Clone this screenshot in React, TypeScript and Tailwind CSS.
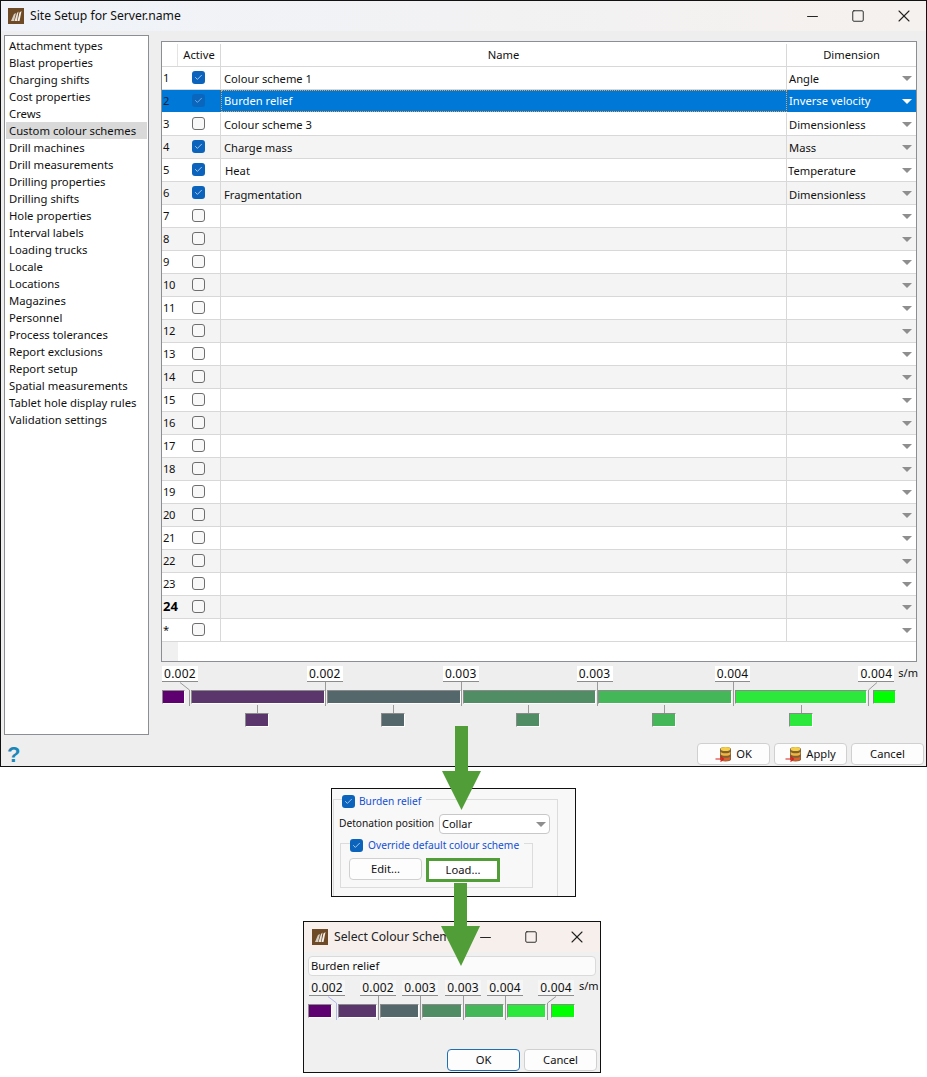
import { Check, Minus, Square, X } from "lucide-react";

const font = "font-['Noto_Sans','Open_Sans',sans-serif]";

const sideItems = [
  "Attachment types",
  "Blast properties",
  "Charging shifts",
  "Cost properties",
  "Crews",
  "Custom colour schemes",
  "Drill machines",
  "Drill measurements",
  "Drilling properties",
  "Drilling shifts",
  "Hole properties",
  "Interval labels",
  "Loading trucks",
  "Locale",
  "Locations",
  "Magazines",
  "Personnel",
  "Process tolerances",
  "Report exclusions",
  "Report setup",
  "Spatial measurements",
  "Tablet hole display rules",
  "Validation settings",
];

interface Row {
  num: string;
  active?: boolean;
  name?: string;
  dimension?: string;
  nudge?: string; // the grid's text isn't quite centred in some rows
}

const filledRows: Row[] = [
  { num: "1", active: true, name: "Colour scheme 1", dimension: "Angle", nudge: "pt-[2px]" },
  { num: "2", active: true, name: "Burden relief", dimension: "Inverse velocity" },
  { num: "3", active: false, name: "Colour scheme 3", dimension: "Dimensionless", nudge: "pt-[3px]" },
  { num: "4", active: true, name: "Charge mass", dimension: "Mass", nudge: "pt-[2px]" },
  { num: "5", active: true, name: "Heat", dimension: "Temperature", nudge: "pt-[3px]" },
  { num: "6", active: true, name: "Fragmentation", dimension: "Dimensionless", nudge: "pt-[4px]" },
];

const emptyRows: Row[] = Array.from({ length: 18 }, (_, i) => ({ num: String(i + 7) }));
const rows: Row[] = [...filledRows, ...emptyRows, { num: "*" }];

// full class strings so tailwind picks them up
const mainLabels = [
  { text: "0.002", cls: "" },
  { text: "0.002", cls: "ml-[109px]" },
  { text: "0.003", cls: "ml-[100px]" },
  { text: "0.003", cls: "ml-[98px]" },
  { text: "0.004", cls: "ml-[102px]" },
  { text: "0.004", cls: "ml-[108px]" },
];

const mainSegments = [
  "w-[23px] bg-[#5f0070]",
  "w-[134px] ml-[6px] bg-[#5a366c]",
  "w-[134px] ml-[2px] bg-[#54686c]",
  "w-[133px] ml-[2px] bg-[#508c64]",
  "w-[134px] ml-[2px] bg-[#44b858]",
  "w-[132px] ml-[3px] bg-[#2de83c]",
  "w-[23px] ml-[6px] bg-[#00ff00]",
];

const mainTicks = ["left-[164px]", "left-[300px]", "left-[436px]", "left-[572px]"];

const smallSwatches = [
  { gap: "ml-[84px]", color: "w-[24px] bg-[#5a366c]" },
  { gap: "ml-[112px]", color: "w-[24px] bg-[#54686c]" },
  { gap: "ml-[111px]", color: "w-[24px] bg-[#508c64]" },
  { gap: "ml-[112px]", color: "w-[24px] bg-[#44b858]" },
  { gap: "ml-[113px]", color: "w-[24px] bg-[#2de83c]" },
];

const dialogLabels = [
  { text: "0.002", cls: "" },
  { text: "0.002", cls: "ml-[15px]" },
  { text: "0.003", cls: "ml-[6px]" },
  { text: "0.003", cls: "ml-[7px]" },
  { text: "0.004", cls: "ml-[6px]" },
  { text: "0.004", cls: "ml-[15px]" },
];

const dialogSegments = [
  "w-[24px] bg-[#5f0070]",
  "w-[39px] ml-[6px] bg-[#5a366c]",
  "w-[39px] ml-[3px] bg-[#54686c]",
  "w-[40px] ml-[3px] bg-[#508c64]",
  "w-[39px] ml-[3px] bg-[#44b858]",
  "w-[39px] ml-[3px] bg-[#2de83c]",
  "w-[24px] ml-[5px] bg-[#00ff00]",
];

const dialogTicks = ["left-[74px]", "left-[116px]", "left-[159px]", "left-[201px]"];

function Logo() {
  return (
    <svg width="16" height="16" viewBox="0 0 16 16" className="shrink-0">
      <rect width="16" height="16" fill="#6f4a26" />
      <path d="M3 13 L6 6 L8 5 L6 13 Z" fill="#d8cfc4" />
      <path d="M6.5 13 L9 5 L10.5 3.5 L9 13 Z" fill="#ece6de" />
      <path d="M9.5 13 L11.5 4.5 L13.5 3 L11.5 13 Z" fill="#f6f2ec" />
    </svg>
  );
}

function CheckBox({ checked = false, selected = false }: { checked?: boolean; selected?: boolean }) {
  if (checked) {
    return (
      <span
        className={`flex h-[13px] w-[13px] shrink-0 items-center justify-center rounded-[3px] ${
          selected ? "bg-[#0a66bd]" : "bg-[#0b63bb]"
        }`}
      >
        <Check size={9} strokeWidth={2} className={selected ? "text-[#8fc0ea]" : "text-[#d8e8f6]"} />
      </span>
    );
  }
  return <span className="block h-[13px] w-[13px] rounded-[3px] border border-[#6e6e6e] bg-[#f8f8f8]" />;
}

function Caret({ color = "#8e8e8e" }: { color?: string }) {
  return (
    <svg width="10" height="5" viewBox="0 0 10 5" className="shrink-0">
      <path d="M0 0 H10 L5 5 Z" fill={color} />
    </svg>
  );
}

function DbIcon() {
  return (
    <svg width="18" height="17" viewBox="0 0 18 17" className="shrink-0">
      <path d="M5 3 C5 0.3 16 0.3 16 3 V13.5 C16 16 5 16 5 13.5 Z" fill="#7d6038" />
      <ellipse cx="10.5" cy="3" rx="4.8" ry="2" fill="#f6cf45" />
      <path d="M5.7 5.8 C7 7.8 14 7.8 15.3 5.8 V8.2 C14 10.2 7 10.2 5.7 8.2 Z" fill="#f2b63c" />
      <path d="M5.7 10.4 C7 12.2 14 12.2 15.3 10.4 V13.2 C14 15.2 7 15.2 5.7 13.2 Z" fill="#d9612c" />
      <path d="M0.5 13 H8 M5.5 10.5 L8.5 13 L5.5 15.5" stroke="#d81e1e" strokeWidth="1.2" fill="none" />
    </svg>
  );
}

function DlgButton({ children, primary = false }: { children: React.ReactNode; primary?: boolean }) {
  return (
    <button
      type="button"
      className={`flex h-[22px] w-[73px] items-center justify-center gap-[3px] rounded-[4px] border bg-[#fdfdfd] text-[11.2px] text-[#111] ${
        primary ? "border-[#1f6fb5]" : "border-[#d0d0d0]"
      }`}
    >
      {children}
    </button>
  );
}

function ValueBox({ text, className = "" }: { text: string; className?: string }) {
  return (
    <span className={`block w-[36px] border-b border-[#8c8c8c] text-center text-[12px] leading-[15px] tracking-[0.2px] text-[#111] ${className}`}>
      {text}
    </span>
  );
}

function Segment({ className }: { className: string }) {
  return (
    <span
      className={`block h-[14px] border border-b-white border-l-[#8a8a8a] border-r-white border-t-[#8a8a8a] ${className}`}
    />
  );
}

export default function App() {
  return (
    <div className={`relative min-h-[1077px] w-[927px] overflow-hidden bg-white pb-[4px] ${font}`}>
      {/* Main window */}
      <div className="box-border flex h-[767px] w-[927px] flex-col border border-[#111] bg-[#eeeeee]">
        <div className="flex h-[30px] shrink-0 items-center bg-gradient-to-r from-[#eff3f9] to-[#f5f1ee] pl-[7px]">
          <Logo />
          <span className="ml-[6px] text-[12.2px] text-[#111]">Site Setup for Server.name</span>
          <div className="ml-auto flex items-center text-[#222]">
            <Minus size={17} strokeWidth={1.4} className="mr-[30px]" />
            <Square size={14} strokeWidth={1.6} className="mr-[29px]" />
            <X size={20} strokeWidth={1.3} className="mr-[12px]" />
          </div>
        </div>

        <div className="flex min-h-0 flex-1">
          {/* Left list */}
          <div className="ml-[3px] w-[145px] shrink-0 pt-[4px]">
            <ul className="box-border h-[700px] border border-[#8b8f94] bg-white px-[1px] pt-[1px]">
              {sideItems.map((item) => (
                <li
                  key={item}
                  className={`flex h-[17px] items-center pl-[3px] pt-[2px] text-[11.3px] text-[#111] ${
                    item === "Custom colour schemes" ? "bg-[#d9d9d9]" : ""
                  }`}
                >
                  {item}
                </li>
              ))}
            </ul>
            <span className="ml-[3px] mt-[8px] block text-[22px] font-bold leading-[24px] text-[#1b87b8] font-['Liberation_Sans',sans-serif]">?</span>
          </div>

          <div className="ml-[12px] flex min-w-0 flex-1 flex-col pt-[10px]">
            {/* Table */}
            <div className="box-border flex h-[621px] w-[756px] flex-col border border-[#8b8f94] bg-white text-[11.2px] text-[#111]">
              <div className="flex h-[25px] shrink-0 border-b border-[#d8d8d8] pt-[2px]">
                <div className="w-[16px] border-r border-[#e4e4e4]" />
                <div className="flex w-[43px] items-center justify-center border-r border-[#d8d8d8]">Active</div>
                <div className="flex w-[566px] items-center justify-center border-r border-[#d8d8d8]">Name</div>
                <div className="flex flex-1 items-center justify-center">Dimension</div>
              </div>

              {rows.map((row, i) => {
                const selected = i === 1;
                const even = i % 2 === 1;
                return (
                  <div
                    key={row.num}
                    className={`flex h-[23px] shrink-0 border-b ${
                      selected ? "border-white bg-[#0078d7] text-white" : even ? "border-[#d8d8d8] bg-[#f4f4f4]" : "border-[#d8d8d8] bg-white"
                    }`}
                  >
                    <div
                      className={`flex w-[16px] items-center pl-[1px] ${selected ? "text-[#10243a]" : ""} ${
                        row.num === "24" ? "text-[13px] font-bold text-black" : ""
                      } ${row.num.length > 1 && row.num !== "24" ? "tracking-[-0.3px]" : ""}`}
                    >
                      {row.num}
                    </div>
                    <div className={`flex w-[43px] items-center justify-center border-r pb-[1px] pr-[2px] ${selected ? "border-[#0078d7]" : "border-[#d8d8d8]"}`}>
                      <CheckBox checked={row.active} selected={selected} />
                    </div>
                    <div
                      className={`flex w-[566px] items-center border-r ${row.nudge ?? ""} ${
                        selected ? "border-dotted border-l border-y border-[#f0a040] pl-[2px]" : "border-[#d8d8d8] pl-[3px]"
                      } ${row.num === "5" ? "pl-[4px]" : ""}`}
                    >
                      {row.name}
                    </div>
                    <div className="flex flex-1 items-center justify-between pl-[2px] pr-[4px]">
                      <span className={`${row.nudge ?? ""} ${row.num === "5" ? "-ml-[1px]" : ""}`}>{row.dimension}</span>
                      <Caret color={selected ? "#ffffff" : "#8e8e8e"} />
                    </div>
                  </div>
                );
              })}

              <div className="flex min-h-0 flex-1">
                <div className="w-[16px] bg-[#f0f0f0]" />
              </div>
            </div>

            {/* Colour scale */}
            <div className="relative h-[80px] w-[757px] shrink-0 pt-[4px]">
              <div className="flex h-[16px] pl-[1px]">
                {mainLabels.map((l, i) => (
                  <ValueBox key={i} text={l.text} className={`bg-white ${l.cls}`} />
                ))}
                <span className="ml-[4px] text-[11px] leading-[14px] text-[#111]">s/m</span>
              </div>
              <div className="mt-[8px] flex pl-[1px]">
                {mainSegments.map((s) => (
                  <Segment key={s} className={s} />
                ))}
              </div>
              <div className="mt-[1px] flex">
                {smallSwatches.map((s) => (
                  <div key={s.gap + s.color} className={`flex w-[24px] flex-col items-center ${s.gap}`}>
                    <span className="block h-[8px] w-px bg-[#9a9a9a]" />
                    <Segment className={s.color} />
                  </div>
                ))}
              </div>

              {/* Ticks sit on top of the bar */}
              {mainTicks.map((t) => (
                <span key={t} className={`absolute top-[20px] h-[24px] w-px bg-[#9a9a9a] ${t}`} />
              ))}
              <svg width="757" height="46" viewBox="0 0 757 46" className="pointer-events-none absolute left-0 top-0">
                <path d="M19 20.5 L28.5 28 V44" stroke="#9a9a9a" fill="none" />
                <path d="M716 20.5 L707.5 28 V44" stroke="#9a9a9a" fill="none" />
              </svg>
            </div>

            <div className="mt-[1px] flex justify-end gap-[4px] pr-[2px]">
              <DlgButton>
                <DbIcon />
                OK
              </DlgButton>
              <DlgButton>
                <DbIcon />
                Apply
              </DlgButton>
              <DlgButton>Cancel</DlgButton>
            </div>
          </div>
        </div>
      </div>

      {/* Burden relief panel */}
      <div className="ml-[331px] mt-[21px] box-border h-[109px] w-[245px] overflow-hidden border border-[#111] bg-[#f8f8f8] text-[10.2px]">
        <div className="ml-[1px] mt-[10px] h-[110px] w-[225px] border border-[#dcdcdc]">
          <div className="ml-[8px] -mt-[5px] flex w-fit items-center gap-[4px] bg-[#f8f8f8] pr-[5px]">
            <CheckBox checked />
            <span className="whitespace-nowrap leading-[13px] text-[#1450d2]">Burden relief</span>
          </div>
          <div className="mt-[6px] flex items-center pl-[5px]">
            <span className="w-[100px] shrink-0 whitespace-nowrap text-[#111]">Detonation position</span>
            <div className="flex h-[20px] w-[111px] items-center justify-between rounded-[4px] border border-[#c8c8c8] bg-white pl-[2px] pr-[3px] text-[11px] text-[#111]">
              Collar
              <Caret />
            </div>
          </div>
          <div className="ml-[6px] mt-[9px] h-[45px] w-[193px] border border-[#dcdcdc]">
            <div className="ml-[9px] -mt-[5px] flex w-fit items-center gap-[5px] bg-[#f8f8f8] pr-[5px]">
              <CheckBox checked />
              <span className="whitespace-nowrap leading-[13px] text-[#1450d2]">Override default colour scheme</span>
            </div>
            <div className="ml-[8px] mt-[6px] flex">
              <DlgButton>Edit...</DlgButton>
              <button
                type="button"
                className="ml-[4px] flex h-[24px] w-[74px] items-center justify-center border-[3px] border-[#519e38] bg-white text-[11.2px] text-[#111]"
              >
                Load...
              </button>
            </div>
          </div>
        </div>
      </div>

      {/* Select colour scheme dialog */}
      <div className="ml-[303px] mt-[24px] box-border flex h-[152px] w-[298px] flex-col border border-[#111] bg-[#f0f0f0]">
        <div className="flex h-[30px] shrink-0 items-center bg-[#f6efec] pl-[8px]">
          <Logo />
          <span className="ml-[6px] text-[12.2px] text-[#222]">Select Colour Scheme</span>
          <div className="ml-auto flex items-center text-[#222]">
            <Minus size={17} strokeWidth={1.4} className="mr-[30px]" />
            <Square size={14} strokeWidth={1.6} className="mr-[29px]" />
            <X size={20} strokeWidth={1.3} className="mr-[13px]" />
          </div>
        </div>
        <div className="relative flex flex-1 flex-col">
          <div className="mx-[4px] mt-[4px] flex h-[20px] w-[288px] items-center rounded-[4px] border border-[#dadada] bg-[#fbfbfb] pl-[2px] text-[11.2px] text-[#111]">
            Burden relief
          </div>
          <div className="mt-[4px] flex h-[16px] pl-[5px]">
            {dialogLabels.map((l, i) => (
              <ValueBox key={i} text={l.text} className={`bg-[#f6f6f6] ${l.cls}`} />
            ))}
            <span className="ml-[5px] text-[11px] leading-[12px] text-[#111]">s/m</span>
          </div>
          <div className="mt-[8px] flex pl-[4px]">
            {dialogSegments.map((s) => (
              <Segment key={s} className={s} />
            ))}
          </div>
          {dialogTicks.map((t) => (
            <span key={t} className={`absolute top-[44px] h-[24px] w-px bg-[#9a9a9a] ${t}`} />
          ))}
          <svg width="296" height="70" viewBox="0 0 296 70" className="pointer-events-none absolute left-0 top-0">
            <path d="M24 44.5 L32.5 51 V68" stroke="#b5b5f0" fill="none" />
            <path d="M252 44.5 L243.5 51 V68" stroke="#9a9a9a" fill="none" />
          </svg>
          <div className="mt-auto mb-[1px] flex justify-end gap-[4px] pr-[3px]">
            <DlgButton primary>OK</DlgButton>
            <DlgButton>Cancel</DlgButton>
          </div>
        </div>
      </div>

      {/* Callout arrows over the windows */}
      <svg width="927" height="1077" viewBox="0 0 927 1077" className="pointer-events-none absolute left-0 top-0">
        <path d="M455 726 H468 V771 H481 L461.5 810 L442 771 H455 Z" fill="#519e38" />
        <path d="M454 883 H467 V926 H480 L461 966 L441 926 H454 Z" fill="#519e38" />
      </svg>
    </div>
  );
}
